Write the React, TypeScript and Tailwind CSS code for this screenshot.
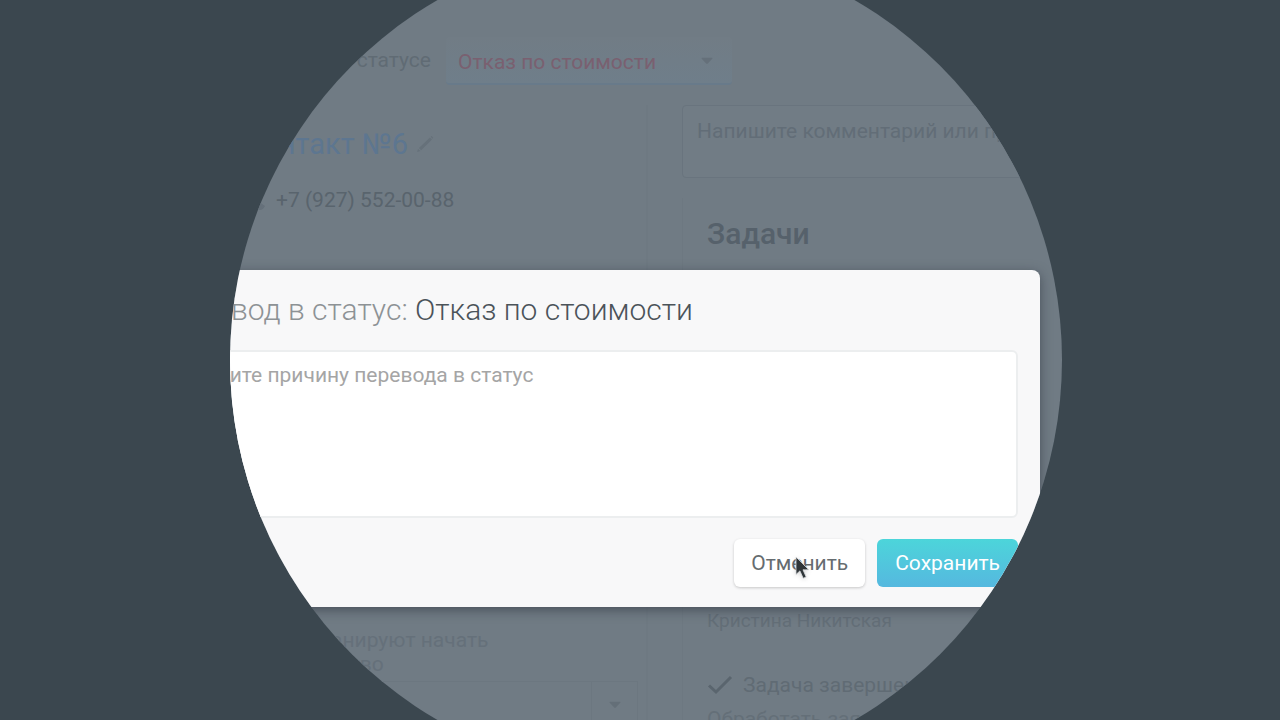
import { useState } from "react";

function Caret({ className }: { className?: string }) {
  return (
    <svg viewBox="0 0 12 8" className={className} aria-hidden="true">
      <path d="M0.5 1.5 Q0.5 0.8 1.2 0.8 H10.8 Q11.5 0.8 11.5 1.5 L6.8 6.6 Q6 7.4 5.2 6.6 Z" fill="currentColor" />
    </svg>
  );
}

function Pencil() {
  return (
    <svg viewBox="0 0 16 16" className="size-[18px] text-[#66717a]" aria-hidden="true">
      <path d="M1 15 L1.8 12.4 L4 14.3 Z M2.6 11.6 L12.4 2.2 L14.2 4 L4.6 13.6 Z M13 1.6 L13.8 0.8 L15.4 2.4 L14.8 3.4 Z" fill="currentColor" />
    </svg>
  );
}

function Cursor() {
  return (
    <svg viewBox="0 0 16 26" className="pointer-events-none absolute top-[17px] left-[61px] h-[26px] w-4 drop-shadow-sm" aria-hidden="true">
      <path d="M1 1 V18.5 L4.9 14.9 L8.2 22.3 L11.2 21 L8 13.8 H13.8 Z" fill="#2f3538" stroke="#d9dcde" strokeWidth="0.8" />
    </svg>
  );
}

function ContactPage() {
  return (
    <div className="h-full bg-[#707b84] text-[21px] leading-6 text-[#606b74]">
      <header className="flex h-[85px] items-end gap-[15px]">
        <label htmlFor="status" className="mb-[13px] w-[431px] text-right">
          Контакт в статусе
        </label>
        <div className="relative w-[286px]">
          <select id="status" defaultValue="price" className="h-12 w-full appearance-none rounded-sm border-b-2 border-[#687a8a] bg-linear-to-b from-[#717c85] to-[#6f7e8a] px-3 pt-1 text-[#7a6070]">
            <option value="price">Отказ по стоимости</option>
          </select>
          <Caret className="absolute top-5 right-[19px] h-2 w-3 text-[#65707a]" />
        </div>
      </header>

      <div className="grid grid-cols-[648px_1fr] gap-[34px] pt-5">
        <section className="flex flex-col border-r-2 border-[#6e7982] pl-[244px]">
          <h1 className="mt-[21px] flex items-center gap-2 text-[29px] leading-9 text-[#5d7690]">
            Контакт №6
            <Pencil />
          </h1>
          <p className="mt-[26px] flex items-center gap-[10px] text-[#59646d]">
            <svg viewBox="0 0 22 22" className="size-[22px] text-[#65707a]" aria-hidden="true">
              <path d="M5 1 L8.5 6 L6.5 8.5 Q9 13 13.5 15.5 L16 13.5 L21 17 Q19 21 16 21 Q4 19 1 6 Q1 3 5 1 Z" fill="currentColor" />
            </svg>
            +7 (927) 552-00-88
          </p>
          <label htmlFor="start" className="mt-[416px] w-[280px] text-[#65707a]">
            Когда планируют начать производство
          </label>
          <div className="mt-[5px] mr-2 flex h-12 border border-[#6c7780]">
            <input id="start" className="min-w-0 flex-1" />
            <button type="button" aria-label="Выбрать" className="flex w-[46px] items-center justify-center border-l border-[#6c7780]">
              <Caret className="h-2 w-3 text-[#646f78]" />
            </button>
          </div>
        </section>

        <section>
          <textarea aria-label="Комментарий" placeholder="Напишите комментарий или примечание" className="block h-[73px] w-full resize-none rounded-sm border border-[#69747e] bg-[#717c85] px-[14px] py-[13px] placeholder:text-[#626d77]" />
          <div className="mt-5 border-l border-[#6d7881] pl-6">
            <h2 className="pt-[18px] text-[30px] leading-9 font-medium text-[#56616b]">Задачи</h2>
            <p className="mt-[357px] text-[19px] text-[#636e77]">Кристина Никитская</p>
            <div className="mt-10 flex items-center gap-[10px]">
              <svg viewBox="0 0 26 20" className="h-5 w-[26px] text-[#5a656e]" aria-hidden="true">
                <path d="M2 10.5 L9 17 L24 2" fill="none" stroke="currentColor" strokeWidth="3" />
              </svg>
              <span>Задача завершена</span>
            </div>
            <p className="mt-[10px] text-[#646f78]">Обработать заявку</p>
          </div>
        </section>
      </div>
    </div>
  );
}

function StatusDialog() {
  const [reason, setReason] = useState("");

  return (
    <div className="absolute inset-0 pt-[270px] pr-[240px] pl-[140px]">
      <form role="dialog" aria-labelledby="dialog-title" className="rounded-lg bg-[#f8f8f9] px-[22px] pb-5 shadow-[0_3px_12px_rgba(45,52,62,0.6)]">
        <h2 id="dialog-title" className="py-[22px] text-[30px] leading-9 font-light text-[#8d9295]">
          Перевод в статус: <span className="text-[#4b5359]">Отказ по стоимости</span>
        </h2>
        <textarea
          aria-label="Причина"
          value={reason}
          onChange={(e) => setReason(e.target.value)}
          placeholder="Опишите причину перевода в статус"
          className="block h-[168px] w-full resize-none rounded-md border-2 border-[#eceeef] bg-white px-[10px] py-[11px] text-[21px] leading-6 text-[#4b5359] placeholder:text-[#a5a5a5]"
        />
        <div className="mt-[21px] flex justify-end gap-3 text-[21px] leading-6">
          <button type="button" className="relative h-12 rounded-md bg-white px-[17px] text-[#666c70] shadow-[0_1px_3px_rgba(0,0,0,0.2)]">
            Отменить
            <Cursor />
          </button>
          <button type="button" className="h-12 rounded-md bg-linear-to-b from-[#4cd5da] to-[#55b8df] px-[18px] text-white">
            Сохранить
          </button>
        </div>
      </form>
    </div>
  );
}

export default function App() {
  return (
    <main className="h-screen overflow-hidden bg-[#3b474f] font-['Roboto',sans-serif]">
      <div className="relative h-full overflow-hidden [clip-path:circle(416px_at_calc(50%+6px)_50%)]">
        <ContactPage />
        <StatusDialog />
      </div>
    </main>
  );
}
